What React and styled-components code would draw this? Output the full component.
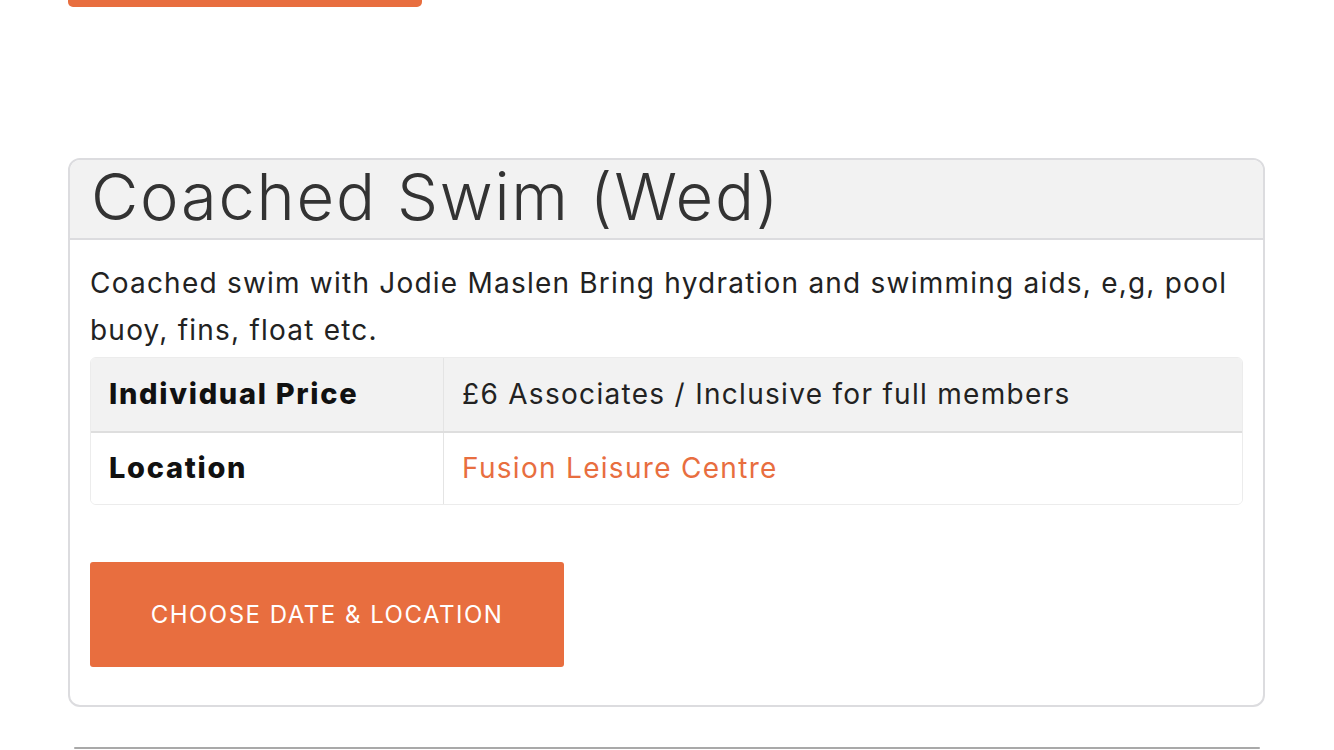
import React from "react";
import styled, { createGlobalStyle } from "styled-components";

const GlobalStyle = createGlobalStyle`
  html, body {
    margin: 0;
    padding: 0;
    background: #fff;
    font-family: Inter, "Noto Sans", sans-serif;
  }
`;

const Page = styled.div`
  width: 1334px;
  height: 750px;
  overflow: hidden;
  display: flex;
  flex-direction: column;
`;

const TopButton = styled.div`
  margin-left: 68px;
  width: 354px;
  height: 7px;
  background: #e86e3f;
  border-radius: 0 0 5px 5px;
`;

const Card = styled.div`
  margin: 151px 0 0 68px;
  width: 1197px;
  height: 549px;
  box-sizing: border-box;
  border: 2px solid #dcdcdf;
  border-radius: 12px;
  overflow: hidden;
`;

const CardHeader = styled.div`
  height: 80px;
  box-sizing: border-box;
  background: #f2f2f2;
  border-bottom: 2px solid #dcdcdf;
  padding-left: 21px;
`;

const Title = styled.h1`
  margin: 0;
  font-size: 65px;
  font-weight: 300;
  line-height: 74px;
  color: #333;
  letter-spacing: 1.75px;
`;

const CardBody = styled.div`
  padding: 20px 20px 0 20px;
`;

const Description = styled.p`
  margin: 0 0 3px;
  font-size: 28px;
  line-height: 47px;
  color: #222;
  letter-spacing: 1.22px;
`;

const Table = styled.div`
  border: 1px solid #ececec;
  border-radius: 6px;
  overflow: hidden;
`;

const Row = styled.div`
  display: grid;
  grid-template-columns: 353px 1fr;
  height: 73px;
  padding-bottom: 2px;
  background: ${(p) => (p.shaded ? "#f2f2f2" : "#fff")};
  border-top: ${(p) => (p.first ? "none" : "2px solid #dedede")};
  box-sizing: border-box;
`;

const Label = styled.div`
  display: flex;
  align-items: center;
  padding-left: 18px;
  font-size: 29px;
  font-weight: 800;
  color: #111;
  letter-spacing: 1.7px;
  border-right: 1px solid #e4e4e4;
  margin-bottom: -2px;
  padding-bottom: 2px;
`;

const Value = styled.div`
  display: flex;
  align-items: center;
  padding-left: 18px;
  font-size: 28px;
  letter-spacing: 1.3px;
  color: ${(p) => (p.link ? "#e86e3f" : "#222")};
`;

const ActionButton = styled.button`
  margin-top: 57px;
  width: 474px;
  height: 105px;
  border: none;
  border-radius: 3px;
  background: #e86e3f;
  color: #fff;
  font-family: inherit;
  font-size: 24px;
  letter-spacing: 1.5px;
  text-transform: uppercase;
  cursor: pointer;
`;

const NextCardEdge = styled.div`
  margin: 40px 0 0 74px;
  width: 1186px;
  height: 2px;
  background: #a9a9a9;
  border-radius: 2px;
`;

export default function App() {
  return (
    <>
      <GlobalStyle />
      <Page>
        <TopButton />
        <Card>
          <CardHeader>
            <Title>Coached Swim (Wed)</Title>
          </CardHeader>
          <CardBody>
            <Description>
              Coached swim with Jodie Maslen Bring hydration and swimming aids,
              e,g, pool buoy, fins, float etc.
            </Description>
            <Table>
              <Row shaded first>
                <Label>Individual Price</Label>
                <Value>£6 Associates / Inclusive for full members</Value>
              </Row>
              <Row>
                <Label>Location</Label>
                <Value link>Fusion Leisure Centre</Value>
              </Row>
            </Table>
            <ActionButton>Choose Date &amp; Location</ActionButton>
          </CardBody>
        </Card>
        <NextCardEdge />
      </Page>
    </>
  );
}
